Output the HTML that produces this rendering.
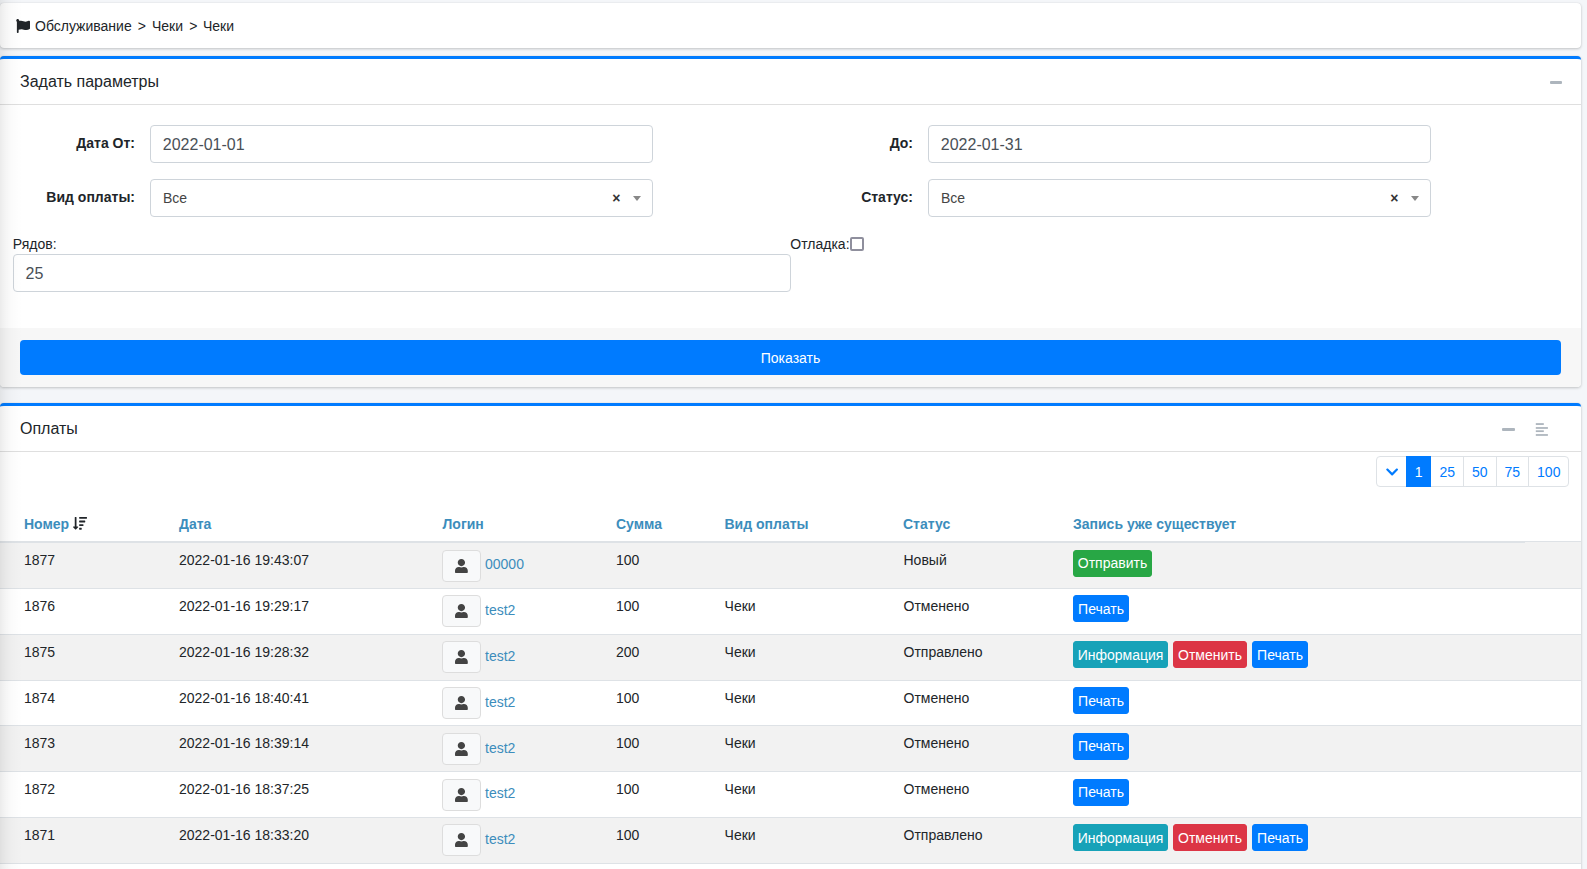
<!DOCTYPE html>
<html><head><meta charset="utf-8"><style>
*{box-sizing:border-box}
html,body{margin:0;padding:0}
body{width:1587px;height:869px;overflow:hidden;background:#f4f6f9;font-family:"Liberation Sans",sans-serif;font-size:14px;color:#212529;position:relative}
.card{position:absolute;left:0;width:1581px;background:#fff;border-radius:4px;box-shadow:0 0 1px rgba(0,0,0,.125),0 1px 3px rgba(0,0,0,.2)}
.outline{border-top:3px solid #007bff}
.a{position:absolute;white-space:nowrap}
.t{position:absolute;white-space:nowrap;line-height:14px;font-size:14px}
.t16{position:absolute;white-space:nowrap;line-height:16px;font-size:16px}
.b{font-weight:bold}
.hr{position:absolute;left:0;width:1581px;height:1px;background:rgba(0,0,0,.125)}
.inp{position:absolute;border:1px solid #ced4da;border-radius:4px;background:#fff;height:38px}
.lbl{position:absolute;font-weight:bold;white-space:nowrap;line-height:14px;text-align:right;width:200px}
.sel-arr{position:absolute;width:0;height:0;border-style:solid;border-width:5px 4px 0 4px;border-color:#888 transparent transparent transparent}
.shadow{position:absolute;left:0;top:0;width:24px;height:869px;z-index:100;background:linear-gradient(to right,rgba(0,0,0,.08) 0px,rgba(0,0,0,.063) 2px,rgba(0,0,0,.04) 6px,rgba(0,0,0,.027) 9px,rgba(0,0,0,.016) 12px,rgba(0,0,0,.008) 17px,rgba(0,0,0,0) 22px)}
.striped{position:absolute;left:0;width:1581px;background:#f2f2f2}
.rb{position:absolute;left:0;width:1581px;height:1px;background:#dee2e6}
.th{position:absolute;font-weight:bold;color:#3c8dbc;white-space:nowrap;line-height:14px}
.ubtn{position:absolute;width:38.5px;height:31.5px;background:#f8f9fa;border:1px solid #ddd;border-radius:4px}
.ubtn svg{position:absolute;left:11.9px;top:7.9px}
.link{position:absolute;color:#3c8dbc;white-space:nowrap;line-height:14px}
.btn{position:absolute;height:27px;color:#fff;border-radius:3px;line-height:27px;padding:0;text-align:center;white-space:nowrap;border:1px solid transparent}
.bs{background:#28a745;border-color:#28a745}
.bp{background:#007bff;border-color:#007bff}
.bi{background:#17a2b8;border-color:#17a2b8}
.bd{background:#dc3545;border-color:#dc3545}
.pg{position:relative;flex:none;height:31px;border:1px solid #dee2e6;margin-left:-1px;color:#007bff;line-height:31px;text-align:center;background:#fff}
</style></head><body>
<div class="card" style="top:3px;height:45px"></div>
<svg class="a" style="left:16px;top:19px" width="14" height="14" viewBox="0 0 512 512" fill="#212529"><path d="M349.565 98.783C295.978 98.783 251.721 64 184.348 64c-24.955 0-47.309 4.384-68.045 12.013a55.947 55.947 0 0 0 3.586-23.562C118.117 24.015 94.806 1.206 66.338.048 34.345-1.254 8 24.296 8 56c0 19.026 9.497 35.825 24 45.945V488c0 13.255 10.745 24 24 24h16c13.255 0 24-10.745 24-24v-94.4c28.311-12.064 63.582-22.122 114.435-22.122 53.588 0 97.844 34.783 165.217 34.783 48.169 0 86.667-16.294 122.505-40.858C506.84 359.452 512 349.571 512 339.045v-243.1c0-23.393-24.269-38.87-45.485-29.016-34.338 15.948-76.454 31.854-116.95 31.854z"/></svg>
<div class="t" style="left:35px;top:19px">Обслуживание</div>
<div class="t" style="left:137.8px;top:19px">&gt;</div>
<div class="t" style="left:152px;top:19px">Чеки</div>
<div class="t" style="left:189.3px;top:19px">&gt;</div>
<div class="t" style="left:203px;top:19px">Чеки</div>
<div class="card outline" style="top:56px;height:331px"></div>
<div class="t16" style="left:20px;top:74px">Задать параметры</div>
<div class="a" style="left:1550px;top:81.4px;width:12.25px;height:2.6px;background:#adb5bd;border-radius:1px"></div>
<div class="hr" style="top:104px"></div>
<div class="lbl" style="left:-65px;top:136px">Дата От:</div>
<div class="inp" style="left:150px;top:125px;width:503px"></div>
<div class="t16" style="left:162.8px;top:137px;color:#495057">2022-01-01</div>
<div class="lbl" style="left:713px;top:136px">До:</div>
<div class="inp" style="left:928px;top:125px;width:503px"></div>
<div class="t16" style="left:940.8px;top:137px;color:#495057">2022-01-31</div>
<div class="lbl" style="left:-65px;top:189.5px">Вид оплаты:</div>
<div class="inp" style="left:150px;top:179px;width:503px"></div>
<div class="t" style="left:162.9px;top:191px;color:#444">Все</div>
<div class="t b" style="left:612.3px;top:191px;color:#333">×</div>
<div class="sel-arr" style="left:633px;top:196px"></div>
<div class="lbl" style="left:713px;top:189.5px">Статус:</div>
<div class="inp" style="left:928px;top:179px;width:503px"></div>
<div class="t" style="left:940.9px;top:191px;color:#444">Все</div>
<div class="t b" style="left:1390.3px;top:191px;color:#333">×</div>
<div class="sel-arr" style="left:1411px;top:196px"></div>
<div class="t" style="left:12.8px;top:237.3px">Рядов:</div>
<div class="inp" style="left:13px;top:254px;width:778px"></div>
<div class="t16" style="left:25.5px;top:266.4px;color:#495057">25</div>
<div class="t" style="left:790.3px;top:237.3px">Отладка:</div>
<div class="a" style="left:850.2px;top:237.2px;width:13.6px;height:13.8px;border:2px solid #8f8f9d;border-radius:2px;background:#fff"></div>
<div class="a" style="left:0;top:328px;width:1581px;height:59px;background:#f7f7f7;border-radius:0 0 4px 4px;border-top:0px solid rgba(0,0,0,.125)"></div>
<div class="a" style="left:20px;top:340px;width:1541px;height:35px;background:#007bff;border-radius:4px"></div>
<div class="t" style="left:0;width:1581px;text-align:center;top:351px;color:#fff">Показать</div>
<div class="card outline" style="top:403px;height:480px"></div>
<div class="t16" style="left:20px;top:421px">Оплаты</div>
<div class="a" style="left:1502.4px;top:428.4px;width:12.25px;height:2.6px;background:#adb5bd;border-radius:1px"></div>
<svg class="a" style="left:1530px;top:418px" width="24" height="24" viewBox="0 0 24 24" fill="#adb5bd"><rect x="5.8" y="5.15" width="8" height="1.8"/><rect x="5.8" y="9.1" width="12.1" height="1.75"/><rect x="5.8" y="12.3" width="8" height="1.75"/><rect x="5.8" y="16.1" width="12.1" height="1.75"/></svg>
<div class="hr" style="top:451px"></div>
<div class="a" style="left:1376.4px;top:456px;height:31px;display:flex">
<div class="pg" style="width:30.25px;border-radius:4px 0 0 4px;margin-left:0"><svg style="position:absolute;left:8.8px;top:8px" width="12.25" height="14" viewBox="0 0 448 512" fill="#007bff"><path d="M207.029 381.476L12.686 187.132c-9.373-9.373-9.373-24.569 0-33.941l22.667-22.667c9.357-9.357 24.522-9.375 33.901-.04L224 284.505l154.745-154.021c9.379-9.335 24.544-9.317 33.901.04l22.667 22.667c9.373 9.373 9.373 24.569 0 33.941L240.971 381.476c-9.373 9.372-24.569 9.372-33.942 0z"/></svg></div>
<div class="pg" style="width:25.78px;background:#007bff;border-color:#007bff;color:#fff;z-index:2">1</div>
<div class="pg" style="width:33.57px">25</div>
<div class="pg" style="width:33.57px">50</div>
<div class="pg" style="width:33.57px">75</div>
<div class="pg" style="width:41.35px;border-radius:0 4px 4px 0">100</div>
</div>
<div class="th" style="left:24px;top:517px">Номер</div>
<div class="th" style="left:179px;top:517px">Дата</div>
<div class="th" style="left:442.5px;top:517px">Логин</div>
<div class="th" style="left:616px;top:517px">Сумма</div>
<div class="th" style="left:724.5px;top:517px">Вид оплаты</div>
<div class="th" style="left:903px;top:517px">Статус</div>
<div class="th" style="left:1073px;top:517px">Запись уже существует</div>
<svg class="a" style="left:73px;top:516.1px" width="14" height="14.6" viewBox="0 0 512 512" preserveAspectRatio="none" fill="#212529"><path d="M187.298 395.314l-79.984 80.002c-6.248 6.247-16.383 6.245-22.627 0L4.705 395.314C-5.365 385.244 1.807 368 16.019 368H64V48c0-8.837 7.163-16 16-16h32c8.837 0 16 7.163 16 16v320h47.984c14.241 0 21.363 17.264 11.314 27.314zM240 96h256c8.837 0 16-7.163 16-16V48c0-8.837-7.163-16-16-16H240c-8.837 0-16 7.163-16 16v32c0 8.837 7.163 16 16 16zm-16 112v-32c0-8.837 7.163-16 16-16h192c8.837 0 16 7.163 16 16v32c0 8.837-7.163 16-16 16H240c-8.837 0-16-7.163-16-16zm0 256v-32c0-8.837 7.163-16 16-16h64c8.837 0 16 7.163 16 16v32c0 8.837-7.163 16-16 16h-64c-8.837 0-16-7.163-16-16zm0-128v-32c0-8.837 7.163-16 16-16h128c8.837 0 16 7.163 16 16v32c0 8.837-7.163 16-16 16H240c-8.837 0-16-7.163-16-16z"/></svg>
<div class="rb" style="top:541px"></div>
<div class="a" style="left:0;top:541px;width:1525px;height:2px;background:#dee2e6;z-index:1"></div>
<div class="striped" style="top:542px;height:46px"></div>
<div class="rb" style="top:588px"></div>
<div class="t" style="left:24px;top:553.00px">1877</div>
<div class="t" style="left:179px;top:553.00px">2022-01-16 19:43:07</div>
<div class="ubtn" style="left:442.2px;top:550.2px"><svg width="12.8" height="14.4" viewBox="0 0 448 512" preserveAspectRatio="none" fill="#444"><path d="M224 256c70.7 0 128-57.3 128-128S294.7 0 224 0 96 57.3 96 128s57.3 128 128 128zm89.6 32h-16.7c-22.2 10.2-46.9 16-72.9 16s-50.6-5.8-72.9-16h-16.7C60.2 288 0 348.2 0 422.4V464c0 26.5 21.5 48 48 48h352c26.5 0 48-21.5 48-48v-41.6c0-74.2-60.2-134.4-134.4-134.4z"/></svg></div>
<div class="link" style="left:485px;top:556.90px">00000</div>
<div class="t" style="left:616px;top:553.00px">100</div>
<div class="t" style="left:724.6px;top:553.00px"></div>
<div class="t" style="left:903.5px;top:553.00px">Новый</div>
<div class="btn bs" style="left:1073px;top:550px;width:79px;line-height:25px">Отправить</div>
<div class="rb" style="top:634px"></div>
<div class="t" style="left:24px;top:598.85px">1876</div>
<div class="t" style="left:179px;top:598.85px">2022-01-16 19:29:17</div>
<div class="ubtn" style="left:442.2px;top:595.2px"><svg width="12.8" height="14.4" viewBox="0 0 448 512" preserveAspectRatio="none" fill="#444"><path d="M224 256c70.7 0 128-57.3 128-128S294.7 0 224 0 96 57.3 96 128s57.3 128 128 128zm89.6 32h-16.7c-22.2 10.2-46.9 16-72.9 16s-50.6-5.8-72.9-16h-16.7C60.2 288 0 348.2 0 422.4V464c0 26.5 21.5 48 48 48h352c26.5 0 48-21.5 48-48v-41.6c0-74.2-60.2-134.4-134.4-134.4z"/></svg></div>
<div class="link" style="left:485px;top:602.90px">test2</div>
<div class="t" style="left:616px;top:598.85px">100</div>
<div class="t" style="left:724.6px;top:598.85px">Чеки</div>
<div class="t" style="left:903.5px;top:598.85px">Отменено</div>
<div class="btn bp" style="left:1073px;top:595px;width:56px;line-height:27px">Печать</div>
<div class="striped" style="top:635px;height:45px"></div>
<div class="rb" style="top:680px"></div>
<div class="t" style="left:24px;top:644.70px">1875</div>
<div class="t" style="left:179px;top:644.70px">2022-01-16 19:28:32</div>
<div class="ubtn" style="left:442.2px;top:641.2px"><svg width="12.8" height="14.4" viewBox="0 0 448 512" preserveAspectRatio="none" fill="#444"><path d="M224 256c70.7 0 128-57.3 128-128S294.7 0 224 0 96 57.3 96 128s57.3 128 128 128zm89.6 32h-16.7c-22.2 10.2-46.9 16-72.9 16s-50.6-5.8-72.9-16h-16.7C60.2 288 0 348.2 0 422.4V464c0 26.5 21.5 48 48 48h352c26.5 0 48-21.5 48-48v-41.6c0-74.2-60.2-134.4-134.4-134.4z"/></svg></div>
<div class="link" style="left:485px;top:648.90px">test2</div>
<div class="t" style="left:616px;top:644.70px">200</div>
<div class="t" style="left:724.6px;top:644.70px">Чеки</div>
<div class="t" style="left:903.5px;top:644.70px">Отправлено</div>
<div class="btn bi" style="left:1073px;top:641px;width:95px;line-height:27px">Информация</div>
<div class="btn bd" style="left:1173px;top:641px;width:74px;line-height:27px">Отменить</div>
<div class="btn bp" style="left:1252px;top:641px;width:56px;line-height:27px">Печать</div>
<div class="rb" style="top:725px"></div>
<div class="t" style="left:24px;top:690.55px">1874</div>
<div class="t" style="left:179px;top:690.55px">2022-01-16 18:40:41</div>
<div class="ubtn" style="left:442.2px;top:687.2px"><svg width="12.8" height="14.4" viewBox="0 0 448 512" preserveAspectRatio="none" fill="#444"><path d="M224 256c70.7 0 128-57.3 128-128S294.7 0 224 0 96 57.3 96 128s57.3 128 128 128zm89.6 32h-16.7c-22.2 10.2-46.9 16-72.9 16s-50.6-5.8-72.9-16h-16.7C60.2 288 0 348.2 0 422.4V464c0 26.5 21.5 48 48 48h352c26.5 0 48-21.5 48-48v-41.6c0-74.2-60.2-134.4-134.4-134.4z"/></svg></div>
<div class="link" style="left:485px;top:694.90px">test2</div>
<div class="t" style="left:616px;top:690.55px">100</div>
<div class="t" style="left:724.6px;top:690.55px">Чеки</div>
<div class="t" style="left:903.5px;top:690.55px">Отменено</div>
<div class="btn bp" style="left:1073px;top:687px;width:56px;line-height:27px">Печать</div>
<div class="striped" style="top:726px;height:45px"></div>
<div class="rb" style="top:771px"></div>
<div class="t" style="left:24px;top:736.40px">1873</div>
<div class="t" style="left:179px;top:736.40px">2022-01-16 18:39:14</div>
<div class="ubtn" style="left:442.2px;top:733.2px"><svg width="12.8" height="14.4" viewBox="0 0 448 512" preserveAspectRatio="none" fill="#444"><path d="M224 256c70.7 0 128-57.3 128-128S294.7 0 224 0 96 57.3 96 128s57.3 128 128 128zm89.6 32h-16.7c-22.2 10.2-46.9 16-72.9 16s-50.6-5.8-72.9-16h-16.7C60.2 288 0 348.2 0 422.4V464c0 26.5 21.5 48 48 48h352c26.5 0 48-21.5 48-48v-41.6c0-74.2-60.2-134.4-134.4-134.4z"/></svg></div>
<div class="link" style="left:485px;top:740.90px">test2</div>
<div class="t" style="left:616px;top:736.40px">100</div>
<div class="t" style="left:724.6px;top:736.40px">Чеки</div>
<div class="t" style="left:903.5px;top:736.40px">Отменено</div>
<div class="btn bp" style="left:1073px;top:733px;width:56px;line-height:25px">Печать</div>
<div class="rb" style="top:817px"></div>
<div class="t" style="left:24px;top:782.25px">1872</div>
<div class="t" style="left:179px;top:782.25px">2022-01-16 18:37:25</div>
<div class="ubtn" style="left:442.2px;top:779.2px"><svg width="12.8" height="14.4" viewBox="0 0 448 512" preserveAspectRatio="none" fill="#444"><path d="M224 256c70.7 0 128-57.3 128-128S294.7 0 224 0 96 57.3 96 128s57.3 128 128 128zm89.6 32h-16.7c-22.2 10.2-46.9 16-72.9 16s-50.6-5.8-72.9-16h-16.7C60.2 288 0 348.2 0 422.4V464c0 26.5 21.5 48 48 48h352c26.5 0 48-21.5 48-48v-41.6c0-74.2-60.2-134.4-134.4-134.4z"/></svg></div>
<div class="link" style="left:485px;top:785.90px">test2</div>
<div class="t" style="left:616px;top:782.25px">100</div>
<div class="t" style="left:724.6px;top:782.25px">Чеки</div>
<div class="t" style="left:903.5px;top:782.25px">Отменено</div>
<div class="btn bp" style="left:1073px;top:779px;width:56px;line-height:25px">Печать</div>
<div class="striped" style="top:818px;height:45px"></div>
<div class="rb" style="top:863px"></div>
<div class="t" style="left:24px;top:828.10px">1871</div>
<div class="t" style="left:179px;top:828.10px">2022-01-16 18:33:20</div>
<div class="ubtn" style="left:442.2px;top:824.2px"><svg width="12.8" height="14.4" viewBox="0 0 448 512" preserveAspectRatio="none" fill="#444"><path d="M224 256c70.7 0 128-57.3 128-128S294.7 0 224 0 96 57.3 96 128s57.3 128 128 128zm89.6 32h-16.7c-22.2 10.2-46.9 16-72.9 16s-50.6-5.8-72.9-16h-16.7C60.2 288 0 348.2 0 422.4V464c0 26.5 21.5 48 48 48h352c26.5 0 48-21.5 48-48v-41.6c0-74.2-60.2-134.4-134.4-134.4z"/></svg></div>
<div class="link" style="left:485px;top:831.90px">test2</div>
<div class="t" style="left:616px;top:828.10px">100</div>
<div class="t" style="left:724.6px;top:828.10px">Чеки</div>
<div class="t" style="left:903.5px;top:828.10px">Отправлено</div>
<div class="btn bi" style="left:1073px;top:824px;width:95px;line-height:27px">Информация</div>
<div class="btn bd" style="left:1173px;top:824px;width:74px;line-height:27px">Отменить</div>
<div class="btn bp" style="left:1252px;top:824px;width:56px;line-height:27px">Печать</div>
<div class="shadow"></div>
</body></html>
